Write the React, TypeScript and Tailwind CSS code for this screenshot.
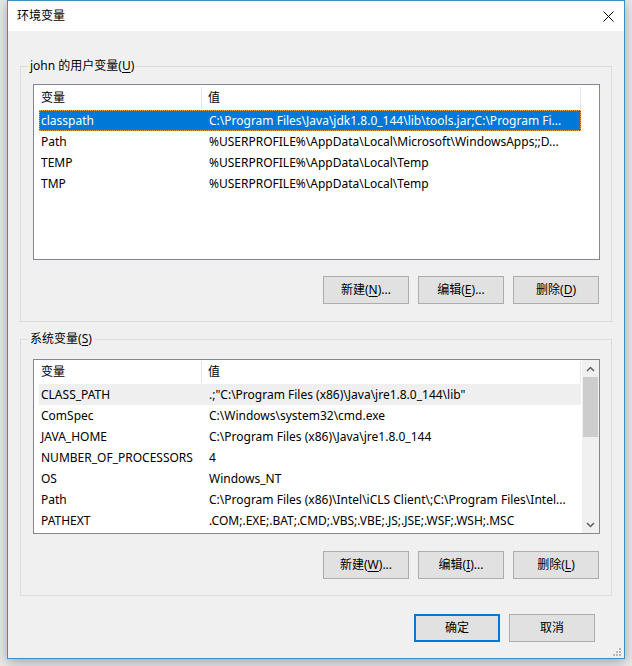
import React from 'react';

type Row = { name: string; value: string };

const userVars: Row[] = [
  { name: 'classpath', value: 'C:\\Program Files\\Java\\jdk1.8.0_144\\lib\\tools.jar;C:\\Program Fi...' },
  { name: 'Path', value: '%USERPROFILE%\\AppData\\Local\\Microsoft\\WindowsApps;;D...' },
  { name: 'TEMP', value: '%USERPROFILE%\\AppData\\Local\\Temp' },
  { name: 'TMP', value: '%USERPROFILE%\\AppData\\Local\\Temp' },
];

const sysVars: Row[] = [
  { name: 'CLASS_PATH', value: '.;"C:\\Program Files (x86)\\Java\\jre1.8.0_144\\lib"' },
  { name: 'ComSpec', value: 'C:\\Windows\\system32\\cmd.exe' },
  { name: 'JAVA_HOME', value: 'C:\\Program Files (x86)\\Java\\jre1.8.0_144' },
  { name: 'NUMBER_OF_PROCESSORS', value: '4' },
  { name: 'OS', value: 'Windows_NT' },
  { name: 'Path', value: 'C:\\Program Files (x86)\\Intel\\iCLS Client\\;C:\\Program Files\\Intel...' },
  { name: 'PATHEXT', value: '.COM;.EXE;.BAT;.CMD;.VBS;.VBE;.JS;.JSE;.WSF;.WSH;.MSC' },
];

const Btn = ({ label, mnemonic, tail = '', primary = false }: { label: string; mnemonic?: string; tail?: string; primary?: boolean }) => (
  <div
    className={`w-[86px] h-[28px] flex items-center justify-center bg-[#e1e1e1] text-[12px] text-black ${
      primary ? 'border-2 border-[#0078d7]' : 'border border-[#adadad]'
    }`}
  >
    {label}
    {mnemonic && (
      <>
        (<u className="underline-offset-2">{mnemonic}</u>)
      </>
    )}
    {tail}
  </div>
);

const Header = ({ tall = false }: { tall?: boolean }) => (
  <div className={`flex ${tall ? 'h-[25px] pt-[1px]' : 'h-[24px]'} w-[547px] shrink-0 items-center text-[12px] text-black`}>
    <div className="w-[168px] h-[22px] pl-[7px] flex items-center border-r border-[#e5e5e5]">变量</div>
    <div className="flex-1 h-[22px] pl-[6px] flex items-center border-r border-[#e5e5e5]">值</div>
  </div>
);

const ListRow = ({ row, state }: { row: Row; state?: 'selected' | 'hover' }) => (
  <div
    className={`ml-[5px] w-[542px] h-[21px] shrink-0 flex items-center text-[12px] whitespace-nowrap ${
      state === 'selected'
        ? 'bg-[#0078d7] text-white outline-1 outline-dotted outline-[#ffa646] -outline-offset-1'
        : state === 'hover'
        ? 'bg-[#efefef] text-black'
        : 'text-black'
    }`}
  >
    <div className="w-[163px] pl-[2px] overflow-hidden">{row.name}</div>
    <div className="flex-1 pl-[7px] overflow-hidden">{row.value}</div>
  </div>
);

const Chevron = ({ up }: { up?: boolean }) => (
  <svg width="9" height="6" viewBox="0 0 9 6">
    <path d={up ? 'M1 5 L4.5 1.5 L8 5' : 'M1 1 L4.5 4.5 L8 1'} fill="none" stroke="#606060" strokeWidth="1.5" />
  </svg>
);

const GroupBox = ({ title, mnemonic, children, height, top }: { title: string; mnemonic: string; children: React.ReactNode; height: string; top: string }) => (
  <div className={`relative w-[592px] ${height} border border-[#dcdcdc] pl-[12px] pr-[11px] ${top} flex flex-col`}>
    <span className="absolute left-[7px] -top-[9px] px-[2px] bg-[#f0f0f0] text-[12px] leading-[16px] text-black">
      {title}(<u className="underline-offset-2">{mnemonic}</u>)
    </span>
    {children}
  </div>
);

export default function App() {
  return (
    <div className="w-[632px] h-[666px] bg-[#e9e9e9] pl-[7px] overflow-hidden font-['Noto_Sans','Noto_Sans_CJK_SC',sans-serif]">
      <div className="relative w-[618px] h-[659px] border border-[#3f8dc6] bg-[#f0f0f0] flex flex-col shadow-[0_3px_12px_rgba(0,0,0,0.3)]">
        {/* title bar */}
        <div className="h-[30px] bg-white flex items-center justify-between pl-[9px] pr-[10px]">
          <span className="text-[12px] text-black">环境变量</span>
          <svg width="11" height="11" viewBox="0 0 11 11">
            <path d="M0.5 0.5 L10.5 10.5 M10.5 0.5 L0.5 10.5" stroke="#000" strokeWidth="1" />
          </svg>
        </div>

        <div className="flex flex-col px-[12px]">
          <div className="mt-[35px]">
            <GroupBox title="john 的用户变量" mnemonic="U" height="h-[256px]" top="pt-[17px]">
              <div className="w-[567px] h-[176px] border border-[#828790] bg-white flex flex-col">
                <Header tall />
                {userVars.map((r, i) => (
                  <ListRow key={r.name} row={r} state={i === 0 ? 'selected' : undefined} />
                ))}
              </div>
              <div className="mt-[16px] flex justify-end gap-[9px] pr-[1px]">
                <Btn label="新建" mnemonic="N" tail="..." />
                <Btn label="编辑" mnemonic="E" tail="..." />
                <Btn label="删除" mnemonic="D" />
              </div>
            </GroupBox>
          </div>

          <div className="mt-[17px]">
            <GroupBox title="系统变量" mnemonic="S" height="h-[257px]" top="pt-[19px]">
              <div className="w-[567px] h-[175px] border border-[#828790] bg-white flex">
                <div className="flex-1 flex flex-col overflow-hidden">
                  <Header />
                  {sysVars.map((r, i) => (
                    <ListRow key={r.name} row={r} state={i === 0 ? 'hover' : undefined} />
                  ))}
                </div>
                <div className="w-[17px] bg-[#f0f0f0] flex flex-col items-center">
                  <div className="h-[17px] flex items-center justify-center">
                    <Chevron up />
                  </div>
                  <div className="w-[15px] h-[60px] bg-[#cdcdcd]" />
                  <div className="flex-1" />
                  <div className="h-[17px] flex items-center justify-center">
                    <Chevron />
                  </div>
                </div>
              </div>
              <div className="mt-[17px] flex justify-end gap-[9px] pr-[1px]">
                <Btn label="新建" mnemonic="W" tail="..." />
                <Btn label="编辑" mnemonic="I" tail="..." />
                <Btn label="删除" mnemonic="L" />
              </div>
            </GroupBox>
          </div>
        </div>

        <div className="mt-[18px] flex justify-end gap-[9px] pr-[29px]">
          <Btn label="确定" primary />
          <Btn label="取消" />
        </div>

        {/* size grip */}
        <svg className="absolute right-[3px] bottom-[2px]" width="8" height="8" viewBox="0 0 8 8">
          <g fill="#b8b8b8">
            <rect x="6" y="0" width="2" height="2" />
            <rect x="3" y="3" width="2" height="2" />
            <rect x="6" y="3" width="2" height="2" />
            <rect x="0" y="6" width="2" height="2" />
            <rect x="3" y="6" width="2" height="2" />
            <rect x="6" y="6" width="2" height="2" />
          </g>
        </svg>
      </div>
    </div>
  );
}
